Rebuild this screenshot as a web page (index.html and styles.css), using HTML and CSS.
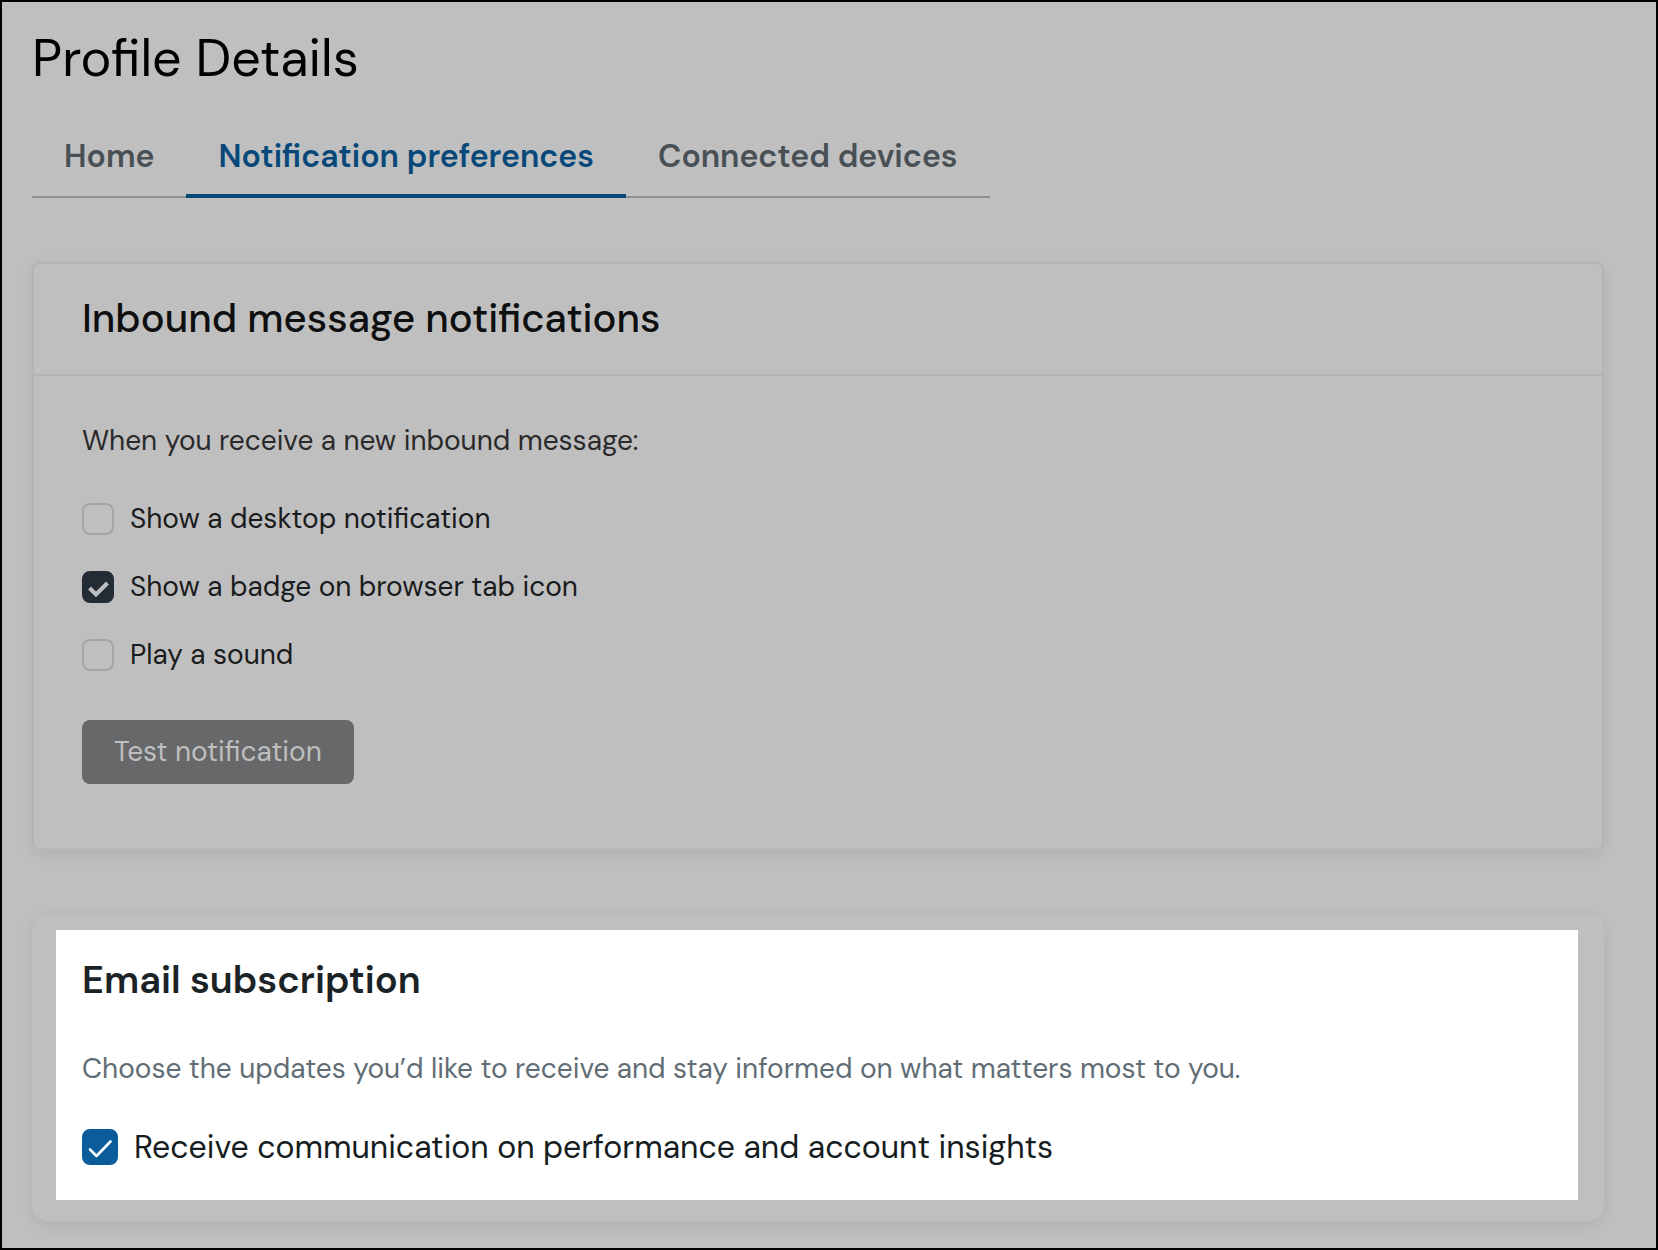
FILE: index.html
```html
<!DOCTYPE html>
<html lang="en">
<head>
    <meta charset="UTF-8">
    <meta name="viewport" content="width=device-width, initial-scale=1.0">
    <title>Profile Details</title>
    <link rel="stylesheet" href="styles.css">
</head>
<body>
    <main class="page">
        <h1 class="page-title">Profile Details</h1>

        <nav class="tabs">
            <a class="tab" href="#home">Home</a>
            <a class="tab active" href="#notifications" aria-current="page">Notification preferences</a>
            <a class="tab" href="#devices">Connected devices</a>
        </nav>

        <!-- Inbound messages -->
        <section class="card">
            <h2 class="card-header">Inbound message notifications</h2>
            <div class="card-body">
                <p class="intro">When you receive a new inbound message:</p>
                <div class="options">
                    <label class="option">
                        <span class="box">
                            <input type="checkbox" name="desktop">
                        </span>
                        Show a desktop notification
                    </label>
                    <label class="option">
                        <span class="box">
                            <input type="checkbox" name="badge" checked>
                            <svg class="tick" viewBox="0 0 32 32"><path d="M7.5 17L14 23.5L25.5 12" fill="none" stroke="currentColor" stroke-width="4"/></svg>
                        </span>
                        Show a badge on browser tab icon
                    </label>
                    <label class="option">
                        <span class="box">
                            <input type="checkbox" name="sound">
                        </span>
                        Play a sound
                    </label>
                </div>
                <button class="test-button" type="button">Test notification</button>
            </div>
        </section>

        <!-- Email subscription -->
        <section class="card email-card">
            <div class="spotlight">
                <h2 class="email-title">Email subscription</h2>
                <p class="email-text">Choose the updates you’d like to receive and stay informed on what matters most to you.</p>
                <label class="option option-large">
                    <span class="box">
                        <input type="checkbox" name="insights" checked>
                        <svg class="tick" viewBox="0 0 36 36"><path d="M8 20.5L14.5 27L28.5 12.5" fill="none" stroke="currentColor" stroke-width="2.6" stroke-linecap="round" stroke-linejoin="round"/></svg>
                    </span>
                    Receive communication on performance and account insights
                </label>
            </div>
        </section>
    </main>
</body>
</html>
```
FILE: styles.css
```css
* {
    box-sizing: border-box;
}
body {
    margin: 0;
    min-height: 100vh;
    border: 2px solid #000;
    background-color: #bfbfbf;
    color: #1a1b1c;
    font-family: "DM Sans", Inter, sans-serif;
    font-size: 28px;
    line-height: 32px;
}
h1, h2, p {
    margin: 0;
}
.page {
    padding: 24px 52px 27px 30px;
}
.page-title {
    color: #000;
    font-size: 52px;
    font-weight: 400;
    line-height: 64px;
}
.tabs {
    display: flex;
    width: fit-content;
    margin-top: 26px;
    box-shadow: inset 0 -2px #8a9193;
}
.tab {
    padding: 24px 32px 22px;
    border-bottom: 4px solid transparent;
    color: #485056;
    font-size: 32px;
    font-weight: 600;
    line-height: 32px;
    text-decoration: none;
}
.tab.active {
    border-color: #07487a;
    color: #07487a;
}
.card {
    margin-top: 64px;
    border: 2px solid #b4b4b4;
    border-bottom-color: #b8b8b8;
    border-radius: 8px;
    box-shadow: 0 4px 16px rgba(0, 0, 0, 0.08);
}
.card-header {
    padding: 31px 48px 33px;
    border-bottom: 2px solid #b4b4b4;
    color: #0e0f10;
    font-size: 40px;
    font-weight: 500;
    line-height: 46px;
}
.card-body {
    padding: 49px 48px 64px;
}
.intro {
    color: #2a2a2b;
}
.options {
    display: flex;
    flex-direction: column;
    gap: 36px;
    margin: 46px 0 49px;
}
.option {
    display: flex;
    align-items: center;
    gap: 16px;
}
.box {
    display: grid;
    flex: none;
    width: 32px;
    height: 32px;
}
.box > * {
    grid-area: 1 / 1;
    width: 100%;
    height: 100%;
}
.box input {
    appearance: none;
    margin: 0;
    border: 2px solid #a5a5a5;
    border-radius: 8px;
}
.box input:checked {
    border-color: #232b34;
    background-color: #232b34;
}
.tick {
    color: #bfbfbf;
    pointer-events: none;
}
.test-button {
    display: block;
    height: 64px;
    padding: 0 32px;
    border: none;
    border-radius: 8px;
    background-color: #67686a;
    color: #bfbfbf;
    font: inherit;
}
.email-card {
    padding: 16px 26px 21px 24px;
    border: none;
    border-radius: 16px;
}
.spotlight {
    padding: 26px 26px 35px;
    background-color: #fff;
}
.email-title {
    color: #1b2327;
    font-size: 38px;
    font-weight: 600;
    line-height: 48px;
}
.email-text {
    margin: 49px 0 44px;
    color: #616d75;
}
.option-large {
    color: #151d21;
    font-size: 32px;
    line-height: 36px;
}
.option-large .box {
    width: 36px;
    height: 36px;
}
.option-large .box input:checked {
    border-color: #0a5c9b;
    background-color: #0a5c9b;
}
.option-large .tick {
    color: #fff;
}
```
